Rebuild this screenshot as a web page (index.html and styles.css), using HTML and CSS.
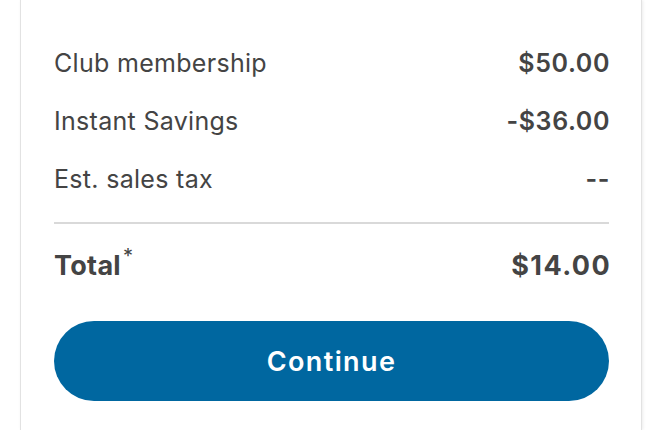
FILE: index.html
```html
<!DOCTYPE html>
<html lang="en">
<head>
  <meta charset="UTF-8">
  <meta name="viewport" content="width=device-width, initial-scale=1.0">
  <title>Order summary</title>
  <link rel="stylesheet" href="styles.css">
</head>
<body>
  <div id="ringkasan">
    <div class="baris">
      <span>Club membership</span>
      <span class="harga">$50.00</span>
    </div>
    <div class="baris">
      <span>Instant Savings</span>
      <span class="harga">-$36.00</span>
    </div>
    <div class="baris">
      <span>Est. sales tax</span>
      <span class="harga">--</span>
    </div>
    <div class="baris baris-total">
      <span>Total<sup>*</sup></span>
      <span class="harga">$14.00</span>
    </div>
    <button class="tombol-lanjut">Continue</button>
  </div>
</body>
</html>
```

FILE: styles.css
```css
body {
  margin: 0;
  background: #fff;
  font-family: "Inter", "Lato", sans-serif;
  color: #444;
}

#ringkasan {
  margin-left: 20px;
  width: 622px;
  min-height: 430px;
  box-sizing: border-box;
  padding: 34px 32px 0 33px;
  border-left: solid 1px #e2e2e2;
  border-right: solid 1px #e2e2e2;
  box-shadow: 1px 0 3px rgba(0, 0, 0, 0.08);
}

.baris {
  display: flex;
  justify-content: space-between;
  align-items: baseline;
  font-size: 25px;
  line-height: 34px;
  letter-spacing: 0.3px;
  padding: 12px 0;
}

.harga {
  font-weight: 600;
  letter-spacing: 0.6px;
  margin-right: -1px;
}

.baris-total {
  border-top: solid 2px #d9d9d9;
  margin-top: 14px;
  padding: 24px 0 0;
  font-size: 27px;
  line-height: 36px;
  font-weight: bold;
}

.baris-total .harga {
  font-weight: bold;
  letter-spacing: 1.4px;
  margin-right: -2px;
}

.baris-total sup {
  font-size: 20px;
  font-weight: normal;
  vertical-align: 12px;
  line-height: 0;
  margin-left: 2px;
}

.tombol-lanjut {
  display: block;
  width: 100%;
  height: 80px;
  margin-top: 37px;
  border: none;
  border-radius: 40px;
  background: #0067a0;
  color: #fff;
  font-family: inherit;
  font-size: 27px;
  font-weight: 600;
  letter-spacing: 1.4px;
}
```
